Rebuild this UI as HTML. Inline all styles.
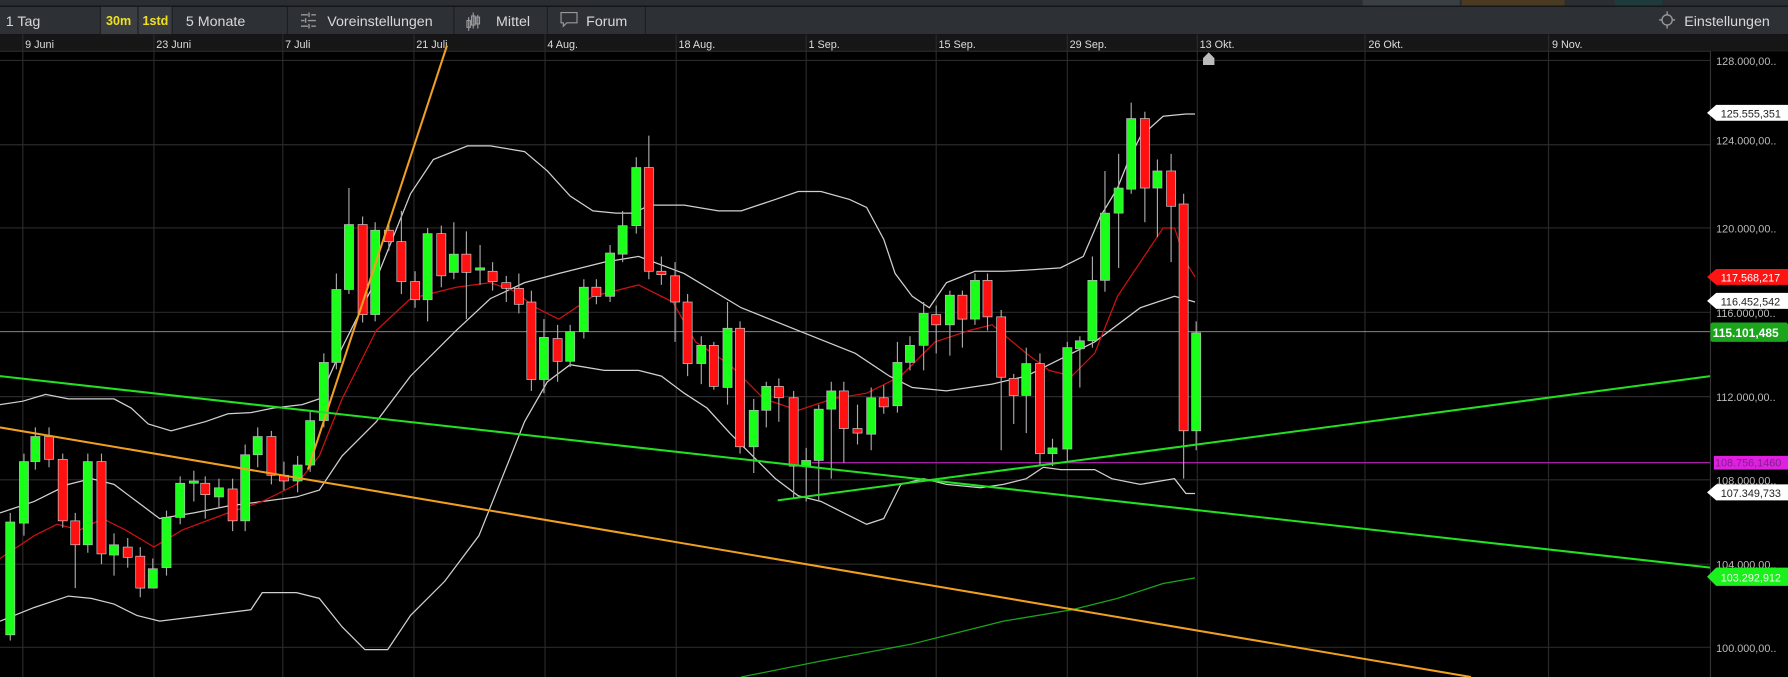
<!DOCTYPE html>
<html><head><meta charset="utf-8"><style>
html,body{margin:0;padding:0;background:#000;width:1788px;height:677px;overflow:hidden;font-family:"Liberation Sans",sans-serif}
svg{display:block}
.g{fill:#19ff19;stroke:#bbb;stroke-width:.6}
.r{fill:#ff1111;stroke:#ccc;stroke-width:.6}
.w{stroke:#aaa;stroke-width:1}
.grid{stroke:#2a2a2a;stroke-width:1}
.tb{fill:#d8d8d8;font-size:12.5px}
.dl{fill:#ddd;font-size:9.5px}
.pl{fill:#bbb;font-size:9.5px}
</style></head><body>
<svg width="1788" height="677" viewBox="0 0 1568 594" preserveAspectRatio="none">
<rect x="0" y="0" width="1568" height="594" fill="#000"/>
<!-- top strip -->
<rect x="0" y="0" width="1568" height="5" fill="#2a2e33"/>
<rect x="1195" y="0" width="85" height="5" fill="#3a3f44"/>
<rect x="1282" y="0" width="90" height="5" fill="#4a3a22"/>
<rect x="1374" y="0" width="40" height="5" fill="#2a2e33"/>
<rect x="1416" y="0" width="42" height="5" fill="#1e3a3a"/>
<!-- toolbar -->
<rect x="0" y="6" width="1568" height="24" fill="#2d3136"/>
<rect x="0" y="5" width="1568" height="1" fill="#15181a"/>
<rect x="88" y="6" width="63" height="24" fill="#3a3e42"/>
<line x1="88" y1="6" x2="88" y2="30" stroke="#1c1e20"/>
<line x1="121" y1="6" x2="121" y2="30" stroke="#1c1e20"/>
<line x1="151" y1="6" x2="151" y2="30" stroke="#1c1e20"/>
<line x1="252" y1="6" x2="252" y2="30" stroke="#1c1e20"/>
<line x1="398" y1="6" x2="398" y2="30" stroke="#1c1e20"/>
<line x1="480" y1="6" x2="480" y2="30" stroke="#1c1e20"/>
<line x1="566" y1="6" x2="566" y2="30" stroke="#1c1e20"/>
<text x="5" y="23" class="tb">1 Tag</text>
<text x="93" y="22" fill="#f0e020" font-size="11" font-weight="bold">30m</text>
<text x="125" y="22" fill="#f0e020" font-size="11" font-weight="bold">1std</text>
<text x="163" y="23" class="tb">5 Monate</text>
<g stroke="#999" stroke-width="1.2"><path d="M264 13h6M273 13h4M264 18h3M270 18h7M264 23h6M273 23h4M271 11v4M268 16v4M271 21v4"/></g>
<text x="287" y="23" class="tb">Voreinstellungen</text>
<g stroke="#999" fill="none"><path d="M411 15v12M415 11v14M419 13v12"/><rect x="409.5" y="18" width="3" height="6"/><rect x="413.5" y="14" width="3" height="8"/><rect x="417.5" y="15" width="3" height="6"/></g>
<text x="435" y="23" class="tb">Mittel</text>
<path d="M492 11h14v9h-9l-3 3v-3h-2z" fill="none" stroke="#999"/>
<text x="514" y="23" class="tb">Forum</text>
<g stroke="#999" fill="none" stroke-width="1.2"><circle cx="1462" cy="17.5" r="4.5"/><path d="M1462 10v3M1462 22v3M1455 17.5h3M1466 17.5h3"/></g>
<text x="1477" y="23" class="tb">Einstellungen</text>
<!-- date axis -->
<rect x="0" y="30" width="1568" height="15" fill="#161616"/>
<line x1="0" y1="45" x2="1568" y2="45" stroke="#2a2a2a"/>
<g class="dl">
<text x="22" y="42">9 Juni</text><text x="137" y="42">23 Juni</text><text x="250" y="42">7 Juli</text><text x="365" y="42">21 Juli</text><text x="480" y="42">4 Aug.</text><text x="595" y="42">18 Aug.</text><text x="709" y="42">1 Sep.</text><text x="823" y="42">15 Sep.</text><text x="938" y="42">29 Sep.</text><text x="1052" y="42">13 Okt.</text><text x="1200" y="42">26 Okt.</text><text x="1361" y="42">9 Nov.</text>
</g>
<!-- grid -->
<g class="grid">
<path d="M20 30V594M135 30V594M248 30V594M363 30V594M478 30V594M593 30V594M707 30V594M821 30V594M936 30V594M1050 30V594M1197 30V594M1358 30V594"/>
<path d="M0 53H1500M0 127H1500M0 200H1500M0 274H1500M0 348H1500M0 421H1500M0 495H1500M0 568H1500"/>
</g>
<path d="M1055 57v-6l5-5 5 5v6z" fill="#bbb"/>
<!-- price line -->
<line x1="0" y1="291" x2="1500" y2="291" stroke="#999" stroke-width=".8"/>
<line x1="712" y1="406" x2="1500" y2="406" stroke="#a020a0" stroke-width="1.2"/>
<!-- bollinger -->
<g fill="none" stroke="#d0d0d0" stroke-width="1.1">
<polyline points="0,355 20,352 40,346 60,350 100,350 115,358 130,372 150,378 165,374 180,370 200,363 220,362 240,358 265,355 280,350 300,305 330,245 360,170 380,140 410,128 430,128 460,133 480,150 500,172 520,185 540,187 555,187 570,180 600,180 630,185 650,185 680,175 700,168 720,168 745,175 760,182 775,210 785,240 800,260 815,270 830,248 855,238 880,238 900,237 930,235 950,225 965,190 980,165 990,140 1000,120 1020,102 1040,100 1048,100"/>
<polyline points="0,450 30,440 60,425 80,420 100,425 120,440 140,455 170,450 200,444 230,440 260,436 280,430 300,400 330,370 360,330 400,290 430,262 460,248 490,240 530,230 560,225 600,240 650,270 700,290 750,310 780,330 800,340 830,343 870,337 900,330 920,320 960,300 1000,270 1030,260 1048,265"/>
<polyline points="0,545 30,533 60,523 80,525 100,530 120,540 140,545 180,540 220,535 230,520 260,520 280,525 300,550 320,570 340,570 360,540 390,510 420,470 440,420 460,370 480,335 500,320 530,325 560,325 580,330 600,345 620,358 640,380 660,400 680,420 700,435 720,440 740,450 760,460 775,455 790,425 810,420 830,425 860,428 880,425 900,420 915,410 930,412 960,412 975,420 1000,425 1030,420 1040,433 1048,433"/>
</g>
<polyline fill="none" stroke="#cc1111" stroke-width="1.1" points="0,490 30,470 50,460 70,465 90,455 110,465 135,480 160,465 200,450 230,440 260,425 280,400 300,350 330,290 360,262 400,252 430,248 450,255 470,270 490,280 520,260 560,250 590,265 610,300 640,320 670,350 700,360 730,350 760,345 790,330 820,300 850,290 870,285 900,310 920,325 940,330 960,310 980,260 1000,230 1020,200 1030,200 1040,230 1048,243"/>
<polyline fill="none" stroke="#1aa51a" stroke-width="1.1" points="650,594 720,580 800,565 880,545 940,535 980,525 1020,512 1048,507"/>
<!-- candles -->
<g id="c"></g>
<g>
<path class="w" d="M9 450V562M21 398V470M31 375V412M43 375V410M55 398V463M66 450V516M77 398V485M89 398V495M100 468V505M112 472V498M123 480V524M134 490V516M146 448V505M158 418V460M170 413V440M180 418V455M192 420V446M204 420V466M215 390V466M226 375V410M238 378V425M249 405V430M261 400V432M272 360V414M284 310V375M295 240V324M306 165V258M318 190V283M329 195V282M341 195V220M352 185V258M364 238V270M375 200V282M387 198V252M398 195V245M409 203V280M421 215V250M432 230V255M444 242V265M455 240V275M466 255V343M477 280V345M489 285V335M500 285V322M512 245V297M523 245V267M535 215V265M546 185V230M558 138V205M569 119V245M580 225V250M592 230V300M603 258V330M615 295V337M626 300V342M638 265V355M649 282V398M661 350V415M672 335V375M683 332V370M696 343V437M707 393V440M718 355V440M729 335V420M740 335V406M752 355V390M764 340V395M775 338V363M787 300V362M798 295V325M810 265V325M821 268V310M833 255V312M844 255V305M855 240V285M866 240V290M878 272V395M889 328V372M900 305V380M912 310V408M923 385V409M936 300V405M947 295V340M958 225V305M969 150V256M981 135V235M992 90V170M1004 98V195M1015 140V208M1027 135V230M1038 170V420M1049 282V395"/>
<g class="g">
<rect x="5" y="458" width="8" height="99"/><rect x="17" y="405" width="8" height="54"/><rect x="27" y="383" width="8" height="22"/><rect x="73" y="405" width="8" height="73"/><rect x="96" y="478" width="8" height="9"/><rect x="130" y="499" width="8" height="17"/><rect x="142" y="454" width="8" height="44"/><rect x="154" y="424" width="8" height="30"/><rect x="166" y="422" width="8" height="2"/><rect x="188" y="428" width="8" height="8"/><rect x="211" y="399" width="8" height="58"/><rect x="222" y="383" width="8" height="16"/><rect x="257" y="408" width="8" height="14"/><rect x="268" y="369" width="8" height="39"/><rect x="280" y="318" width="8" height="51"/><rect x="291" y="254" width="8" height="64"/><rect x="302" y="197" width="8" height="57"/><rect x="325" y="202" width="8" height="74"/><rect x="371" y="205" width="8" height="58"/><rect x="394" y="223" width="8" height="16"/><rect x="417" y="235" width="8" height="2"/><rect x="473" y="296" width="8" height="37"/><rect x="496" y="291" width="8" height="26"/><rect x="508" y="252" width="8" height="39"/><rect x="531" y="222" width="8" height="38"/><rect x="542" y="198" width="8" height="25"/><rect x="554" y="147" width="8" height="51"/><rect x="611" y="303" width="8" height="16"/><rect x="634" y="288" width="8" height="52"/><rect x="657" y="360" width="8" height="32"/><rect x="668" y="339" width="8" height="21"/><rect x="703" y="404" width="8" height="5"/><rect x="714" y="359" width="8" height="45"/><rect x="725" y="343" width="8" height="16"/><rect x="760" y="349" width="8" height="32"/><rect x="783" y="318" width="8" height="38"/><rect x="794" y="303" width="8" height="15"/><rect x="806" y="275" width="8" height="28"/><rect x="829" y="259" width="8" height="26"/><rect x="851" y="246" width="8" height="34"/><rect x="896" y="319" width="8" height="28"/><rect x="919" y="393" width="8" height="5"/><rect x="932" y="305" width="8" height="89"/><rect x="943" y="299" width="8" height="7"/><rect x="954" y="246" width="8" height="53"/><rect x="965" y="187" width="8" height="59"/><rect x="977" y="165" width="8" height="22"/><rect x="988" y="104" width="8" height="62"/><rect x="1011" y="150" width="8" height="15"/><rect x="1045" y="292" width="8" height="86"/>
</g>
<g class="r">
<rect x="39" y="383" width="8" height="20"/><rect x="51" y="403" width="8" height="54"/><rect x="62" y="457" width="8" height="21"/><rect x="85" y="405" width="8" height="81"/><rect x="108" y="480" width="8" height="9"/><rect x="119" y="488" width="8" height="28"/><rect x="176" y="424" width="8" height="10"/><rect x="200" y="429" width="8" height="28"/><rect x="234" y="383" width="8" height="34"/><rect x="245" y="417" width="8" height="5"/><rect x="314" y="197" width="8" height="79"/><rect x="337" y="202" width="8" height="10"/><rect x="348" y="212" width="8" height="35"/><rect x="360" y="247" width="8" height="16"/><rect x="383" y="205" width="8" height="37"/><rect x="405" y="223" width="8" height="16"/><rect x="428" y="238" width="8" height="9"/><rect x="440" y="248" width="8" height="5"/><rect x="451" y="253" width="8" height="14"/><rect x="462" y="265" width="8" height="68"/><rect x="485" y="297" width="8" height="20"/><rect x="519" y="252" width="8" height="8"/><rect x="565" y="147" width="8" height="91"/><rect x="576" y="238" width="8" height="3"/><rect x="588" y="242" width="8" height="23"/><rect x="599" y="265" width="8" height="54"/><rect x="622" y="303" width="8" height="36"/><rect x="645" y="288" width="8" height="104"/><rect x="679" y="339" width="8" height="10"/><rect x="692" y="349" width="8" height="60"/><rect x="736" y="343" width="8" height="33"/><rect x="748" y="376" width="8" height="4"/><rect x="771" y="349" width="8" height="8"/><rect x="817" y="276" width="8" height="9"/><rect x="840" y="259" width="8" height="21"/><rect x="862" y="246" width="8" height="32"/><rect x="874" y="278" width="8" height="53"/><rect x="885" y="332" width="8" height="15"/><rect x="908" y="319" width="8" height="79"/><rect x="1000" y="104" width="8" height="61"/><rect x="1023" y="150" width="8" height="31"/><rect x="1034" y="179" width="8" height="199"/>
</g>
</g>
<!-- trend lines -->
<line x1="270" y1="412" x2="392" y2="40" stroke="#f0a020" stroke-width="1.8"/>
<line x1="0" y1="375" x2="1290" y2="594" stroke="#f0a020" stroke-width="1.8"/>
<line x1="0" y1="330" x2="1500" y2="498" stroke="#22e022" stroke-width="1.8"/>
<line x1="682" y1="439" x2="1500" y2="330" stroke="#22e022" stroke-width="1.8"/>
<!-- price axis -->
<rect x="1500" y="45" width="68" height="549" fill="#000"/>
<line x1="1500" y1="45" x2="1500" y2="594" stroke="#333"/>
<g class="pl">
<text x="1505" y="57">128.000,00..</text><text x="1505" y="127">124.000,00..</text><text x="1505" y="204">120.000,00..</text><text x="1505" y="278">116.000,00..</text><text x="1505" y="352">112.000,00..</text><text x="1505" y="425">108.000,00..</text><text x="1505" y="499">104.000,00..</text><text x="1505" y="572">100.000,00..</text>
</g>
<g font-size="9.5">
<path d="M1497 99l8-7h63v14h-63z" fill="#fff"/><text x="1509" y="103" fill="#222">125.555,351</text>
<path d="M1497 243l8-7h63v14h-63z" fill="#ff1414"/><text x="1509" y="247" fill="#fff">117.568,217</text>
<path d="M1497 264l8-7h63v14h-63z" fill="#fff"/><text x="1509" y="268" fill="#222">116.452,542</text>
<rect x="1500" y="283" width="68" height="17" rx="2" fill="#1aa51a"/><text x="1502" y="295.5" fill="#fff" font-weight="bold" font-size="10.5">115.101,485</text>
<rect x="1503" y="400" width="65" height="12" fill="#e020e0"/><text x="1504" y="409.5" fill="#80208a">108.756,1460</text>
<path d="M1497 432l8-7h63v14h-63z" fill="#fff"/><text x="1509" y="436" fill="#222">107.349,733</text>
<path d="M1497 506l8-8h63v16h-63z" fill="#1cf01c"/><text x="1509" y="510" fill="#eaffea">103.292,912</text>
</g>
</svg>
</body></html>
